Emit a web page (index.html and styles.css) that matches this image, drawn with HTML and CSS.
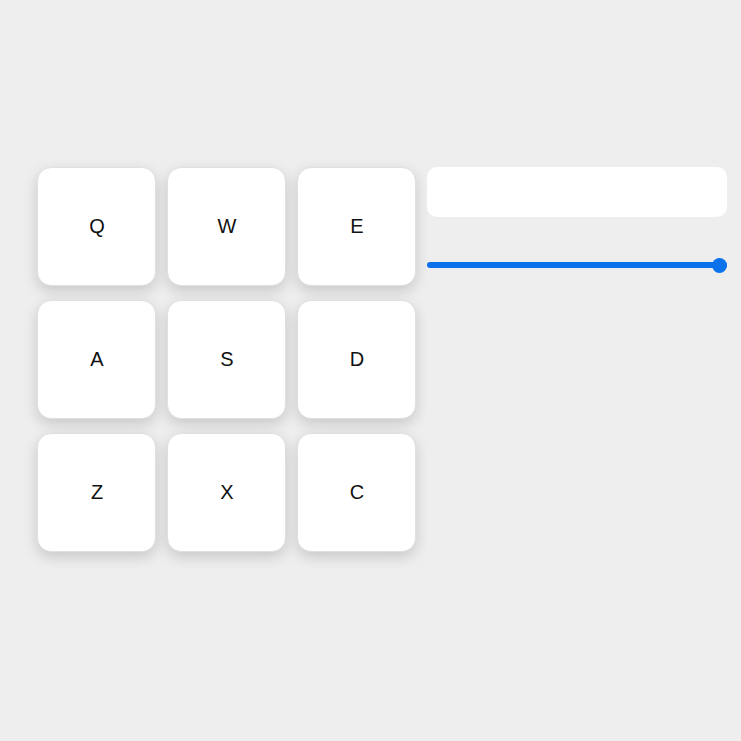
FILE: index.html
```html
<!DOCTYPE html>
<html lang="en">
<head>
<meta charset="utf-8">
<title>Keypad</title>
<link rel="stylesheet" href="styles.css">
</head>
<body>
<main class="app">
  <div class="keypad">
    <button class="key">Q</button>
    <button class="key">W</button>
    <button class="key">E</button>
    <button class="key">A</button>
    <button class="key">S</button>
    <button class="key">D</button>
    <button class="key">Z</button>
    <button class="key">X</button>
    <button class="key">C</button>
  </div>
  <div class="side">
    <input class="field" type="text" aria-label="Output">
    <input class="slider" type="range" min="0" max="100" value="100" aria-label="Volume">
  </div>
</main>
</body>
</html>
```
FILE: styles.css
```css
html, body {
  margin: 0;
  padding: 0;
  background: #eeeeee;
  font-family: "Liberation Sans", Arial, sans-serif;
}

.app {
  box-sizing: border-box;
  min-height: 741px;
  display: flex;
  align-items: flex-start;
  gap: 11px;
  padding: 167px 0 40px 37px;
}

.keypad {
  display: grid;
  grid-template-columns: repeat(3, 119px);
  grid-auto-rows: 119px;
  column-gap: 11px;
  row-gap: 14px;
}

.key {
  display: flex;
  align-items: center;
  justify-content: center;
  background: #ffffff;
  border: 1px solid #e0e0e0;
  border-radius: 14px;
  box-shadow: 0 5px 14px rgba(0, 0, 0, 0.16);
  font-family: "Liberation Sans", Arial, sans-serif;
  font-size: 20px;
  color: #111111;
  padding: 0 0 0 1px;
  margin: 0;
}

.side {
  display: flex;
  flex-direction: column;
  width: 300px;
}

.field {
  box-sizing: border-box;
  width: 300px;
  height: 50px;
  border: none;
  border-radius: 10px;
  background: #ffffff;
  margin: 0;
  padding: 0 12px;
  outline: none;
}

.slider {
  -webkit-appearance: none;
  appearance: none;
  width: 300px;
  height: 16px;
  margin: 40px 0 0 0;
  padding: 0;
  background: transparent;
}

.slider::-webkit-slider-runnable-track {
  height: 6px;
  border-radius: 3px;
  background: #0b72ec;
}

.slider::-webkit-slider-thumb {
  -webkit-appearance: none;
  appearance: none;
  width: 15px;
  height: 15px;
  border-radius: 50%;
  background: #0b72ec;
  margin-top: -4.5px;
  border: none;
}
```
